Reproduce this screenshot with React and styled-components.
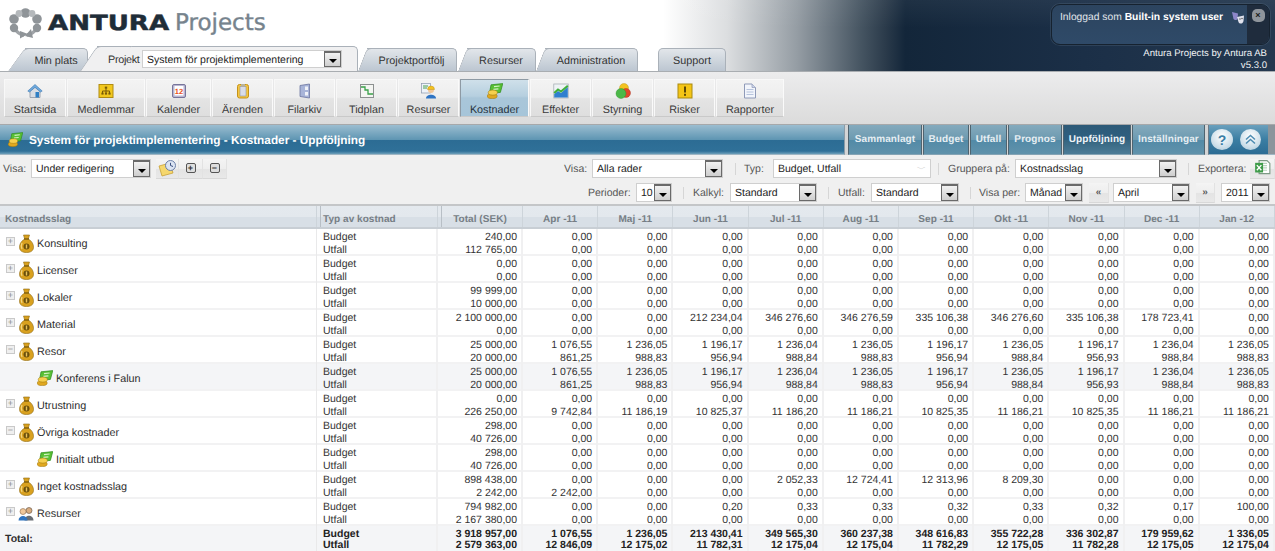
import styled, { createGlobalStyle } from "styled-components";

const GlobalStyle = createGlobalStyle`
  html, body {
    margin: 0;
    padding: 0;
    background: #f0f0f0;
  }
  body {
    width: 1275px;
    height: 551px;
    overflow: hidden;
    font-family: "Liberation Sans", Arial, sans-serif;
    color: #333;
    text-rendering: geometricPrecision;
  }
`;

const Page = styled.div`
  width: 1275px;
  height: 551px;
  overflow: hidden;
`;

/* ---------- header ---------- */

const Header = styled.header`
  display: flex;
  height: 71px;
  background:
    linear-gradient(180deg, rgba(255, 255, 255, 0.05), rgba(255, 255, 255, 0) 40%),
    linear-gradient(90deg, #fff 0, #fff 52%, #dcdee0 57%, #959da4 62.5%, #465562 67.5%, #2a3a4a 69.5%, #13263a 71%, #1b2f47 85%, #24384f 100%);
`;

const HeaderLeft = styled.div`
  display: flex;
  flex-direction: column;
  flex: 1;
`;

const Logo = styled.div`
  display: flex;
  align-items: center;
  height: 46px;
  padding: 0 0 0 9px;
  box-sizing: border-box;
`;

const LogoWord = styled.span`
  display: inline-block;
  width: 121px;
  margin-left: 6px;
  font-family: "DejaVu Sans", sans-serif;
  font-weight: bold;
  font-size: 21px;
  line-height: 24px;
  color: #1f2d38;
  transform: scaleX(1.24);
  transform-origin: left center;
  -webkit-text-stroke: 0.5px #1f2d38;
`;

const LogoProduct = styled.span`
  margin-left: 6px;
  font-family: "DejaVu Sans", sans-serif;
  font-size: 23px;
  line-height: 24px;
  color: #76838d;
  -webkit-text-stroke: 0.4px #76838d;
`;

const TabRow = styled.nav`
  display: flex;
  align-items: flex-end;
  height: 25px;
  padding-left: 25px;
`;

const Tab = styled.div`
  position: relative;
  display: flex;
  align-items: center;
  justify-content: center;
  box-sizing: border-box;
  width: ${(p) => p.$w}px;
  height: ${(p) => (p.$active ? 25 : 23)}px;
  margin-left: ${(p) => p.$ml || 0}px;
  font-size: 10.8px;
  color: #333;
  border: 1px solid #aab1b9;
  border-bottom: 0;
  border-radius: ${(p) => (p.$round ? "5px 5px 0 0" : "0 5px 0 0")};
  border-left: ${(p) => (p.$round ? "1px solid #aab1b9" : "0")};
  background: ${(p) => (p.$active ? "#f0f0f1" : "linear-gradient(180deg, #e2e6ea, #bcc6d1)")};
  z-index: ${(p) => (p.$active ? 2 : 1)};

  ${(p) =>
    p.$round
      ? ""
      : `
  &::before {
    content: "";
    position: absolute;
    top: -1px;
    bottom: 0;
    left: -${p.$slope}px;
    width: ${p.$slope * 2}px;
    border-top: 1px solid #aab1b9;
    border-left: 1px solid #aab1b9;
    border-radius: 5px 0 0 0;
    background: ${p.$active ? "#f0f0f1" : "linear-gradient(180deg, #e2e6ea, #bcc6d1)"};
    transform: skewX(-${p.$angle}deg);
    transform-origin: left bottom;
    z-index: -1;
  }`}
`;

const TabLabel = styled.span`
  position: relative;
  padding-top: 2px;
  white-space: nowrap;
`;

const ProjectLabel = styled(TabLabel)`
  letter-spacing: -0.3px;
`;

const ProjectPicker = styled.div`
  position: relative;
  display: grid;
  grid-template-columns: 34px 200px;
  align-items: center;
  box-sizing: border-box;
  width: 100%;
  padding-left: 11px;
`;

const UserArea = styled.div`
  box-sizing: border-box;
  width: 224px;
  padding: 4px 5px 0 0;
`;

const LoginBox = styled.div`
  display: flex;
  height: 41px;
  box-sizing: border-box;
  overflow: hidden;
  border: 1px solid #16222f;
  border-radius: 9px;
  background: linear-gradient(180deg, #2c445f, #2f4a68);
  box-shadow: 0 0 0 1px rgba(120, 140, 160, 0.2);
`;

const LoginText = styled.div`
  display: flex;
  flex: 1;
  align-items: flex-start;
  gap: 7px;
  padding: 6px 0 0 8px;
  font-size: 10.3px;
  line-height: 14px;
  color: #e2e7ec;
  white-space: nowrap;

  b {
    color: #fff;
  }
`;

const LoginSide = styled.div`
  display: flex;
  justify-content: center;
  width: 22px;
  padding-top: 4px;
  background: #1f2c3d;
`;

const Logout = styled.div`
  width: 13px;
  height: 13px;
  border-radius: 5px;
  background: #8f959c;
  color: #222;
  font-size: 9px;
  font-weight: bold;
  line-height: 13px;
  text-align: center;
`;

const Credit = styled.div`
  padding: 3px 3px 0 0;
  font-size: 9.6px;
  line-height: 12px;
  color: #f0f2f4;
  text-align: right;
`;

/* ---------- main toolbar ---------- */

const Toolbar = styled.div`
  display: flex;
  gap: 1px;
  height: 53px;
  box-sizing: border-box;
  padding: 7px 0 0 4px;
  border-top: 1px solid #a9adb1;
  background: linear-gradient(180deg, #ececed, #dbdbdb);
`;

const ToolButton = styled.div`
  display: flex;
  flex-direction: column;
  align-items: center;
  box-sizing: border-box;
  width: ${(p) => p.$w}px;
  height: 38px;
  padding-top: 3px;
  font-size: 10.8px;
  color: ${(p) => (p.$active ? "#26333d" : "#3a3a3a")};
  border-right: 1px solid #fafafa;
  border-bottom: 1px solid #c9c9c9;
  border-top: 1px solid ${(p) => (p.$active ? "#8e9aa4" : "#f8f8f8")};
  border-left: 1px solid ${(p) => (p.$active ? "#8e9aa4" : "#f8f8f8")};
  background: ${(p) =>
    p.$active
      ? "linear-gradient(180deg, #cfe0ea 0, #b6cfdf 45%, #a9c6d9 50%, #a6c5d9 100%)"
      : "linear-gradient(180deg, #f3f3f3 0, #eeeeee 48%, #e4e4e4 52%, #dedede 100%)"};
`;

const ToolLabel = styled.span`
  margin-top: 5px;
  line-height: 13px;
  white-space: nowrap;
`;

/* ---------- title bar ---------- */

const TitleRow = styled.div`
  display: flex;
  height: 31px;
  box-sizing: border-box;
  border-top: 1px solid #a6a8aa;
  background: #d4d5d6;
`;

const TitleBar = styled.div`
  display: flex;
  align-items: center;
  gap: 6px;
  width: 847px;
  box-sizing: border-box;
  padding-left: 8px;
  font-size: 11.8px;
  font-weight: bold;
  color: #fff;
  border-right: 1px solid #8a9ba7;
  border-bottom: 1px solid #9fb6c4;
  background: linear-gradient(180deg, #9bbdd0 0, #5f96b3 50%, #2c6c94 52%, #2f7098 90%, #6d9fba 100%);
`;

const ViewTabs = styled.div`
  display: flex;
  gap: 1px;
  margin-left: 3px;
`;

const ViewTab = styled.div`
  display: flex;
  align-items: center;
  justify-content: center;
  width: ${(p) => p.$w}px;
  box-sizing: border-box;
  font-size: 10px;
  font-weight: bold;
  color: ${(p) => (p.$active ? "#eef4f8" : "#e6eef3")};
  letter-spacing: 0.1px;
  border-left: 1px solid #4f6470;
  border-right: 1px solid #4f6470;
  border-bottom: 1px solid #85a4b5;
  background: ${(p) =>
    p.$active
      ? "linear-gradient(180deg, #2d5a78 0, #2e5f80 50%, #34647f 52%, #4c7c97 100%)"
      : "linear-gradient(180deg, #84aabd 0, #6d9ab0 50%, #528aa7 52%, #6092ab 100%)"};
`;

const RoundBox = styled.div`
  display: flex;
  align-items: center;
  gap: 7px;
  margin-left: 3px;
  flex: 1;
  padding-left: 2px;
  border-left: 1px solid #6d7c87;
  border-bottom: 1px solid #9fb6c4;
  background: linear-gradient(180deg, #6aa0bd 0, #3b7ea3 50%, #2c6c94 100%);
`;

const RoundButton = styled.div`
  display: flex;
  align-items: center;
  justify-content: center;
  width: ${(p) => p.$w}px;
  height: 21px;
  border-radius: 50%;
  background: radial-gradient(circle at 50% 35%, #ffffff 0, #cfe0ea 60%, #a5c3d5 100%);
  color: #3c7ea6;
  font-size: 14px;
  font-weight: bold;
`;

const Grip = styled.div`
  margin-left: auto;
  align-self: stretch;
  width: 7px;
  background: #8b959c;
`;

/* ---------- filters ---------- */

const Filters = styled.div`
  display: flex;
  flex-direction: column;
  gap: 5px;
  height: 49px;
  box-sizing: border-box;
  padding-top: 4px;
  background: #f0f0f0;
`;

const FilterRow = styled.div`
  display: flex;
  align-items: center;
  height: 19px;
  padding: 0 ${(p) => p.$pr || 0}px 0 3px;
`;

const Field = styled.div`
  display: flex;
  align-items: center;
  gap: ${(p) => p.$gap}px;
  margin-right: ${(p) => p.$mr || 0}px;
`;

const Label = styled.span`
  width: ${(p) => p.$w}px;
  padding-top: 1px;
  font-size: 10.5px;
  color: #555;
  white-space: nowrap;
`;

const SelectBox = styled.div`
  display: flex;
  align-items: center;
  justify-content: space-between;
  box-sizing: border-box;
  width: ${(p) => p.$w}px;
  height: ${(p) => p.$h || 19}px;
  padding: 1px 0 0 4px;
  font-size: 10.5px;
  color: #222;
  background: #fff;
  border: 1px solid #cfcfcf;
  white-space: nowrap;
  overflow: hidden;
`;

const SelectArrow = styled.span`
  display: flex;
  align-items: center;
  justify-content: center;
  flex: none;
  align-self: stretch;
  box-sizing: border-box;
  width: 17px;
  margin-top: -1px;
  border: 1px solid #6a6a6a;
  border-top-width: 2px;
  background: linear-gradient(180deg, #f2f2f2, #cfcfcf);

  &::after {
    content: "";
    margin-top: 3px;
    border: 4px solid transparent;
    border-top: 4px solid #000;
    border-bottom: 0;
  }
`;

const DisabledArrow = styled.span`
  flex: none;
  width: 17px;
  font-size: 9px;
  color: #b5b5b5;
  text-align: center;
`;

const Sep = styled.span`
  width: 1px;
  height: 12px;
  margin: 0 ${(p) => p.$r || 9}px 0 ${(p) => p.$l || 11}px;
  background: #d6d6d6;
`;

const Spacer = styled.span`
  flex: 1;
`;

const IconButton = styled.div`
  display: flex;
  align-items: center;
  justify-content: center;
  box-sizing: border-box;
  width: ${(p) => p.$w}px;
  height: 20px;
  margin-left: ${(p) => p.$ml || 0}px;
  font-size: 10px;
  font-weight: bold;
  color: #555;
  border-right: 1px solid #e2e2e2;
  border-bottom: 1px solid #d8d8d8;
  background: linear-gradient(180deg, #f4f4f4 0, #eeeeee 50%, #e4e4e4 52%, #e8e8e8 100%);
`;

const Square = styled.span`
  display: flex;
  align-items: center;
  justify-content: center;
  box-sizing: border-box;
  width: 10px;
  height: 10px;
  border: 1px solid #555;
  border-radius: 2px;
  background: #dedede;
  color: #333;
  font-size: 9px;
  font-weight: bold;
  line-height: 8px;
`;

/* ---------- table ---------- */

const COLUMNS = "317px 121px 85px repeat(10, 75.2px)";

const HeadRow = styled.div`
  display: grid;
  grid-template-columns: ${COLUMNS};
  height: 25px;
  box-sizing: border-box;
  border-top: 2px solid #c4c6c8;
  border-bottom: 2px solid #c8ced4;
  background: linear-gradient(180deg, #e4e9ee 0, #e3e8ed 50%, #d8dfe6 52%, #d8dfe6 100%);
`;

const HeadCell = styled.div`
  position: relative;
  display: flex;
  align-items: center;
  justify-content: ${(p) => (p.$left ? "flex-start" : "center")};
  padding: 5px 0 0 ${(p) => p.$pl || 0}px;
  font-size: 10px;
  font-weight: bold;
  color: #767e85;
  letter-spacing: 0.05px;
  border-right: 1px solid #cdd4da;
  white-space: nowrap;

  ${(p) =>
    p.$split
      ? `&::before {
    content: "";
    position: absolute;
    top: 0;
    bottom: 0;
    left: 3px;
    width: 1px;
    background: #b8bfc6;
  }`
      : ""}
`;

const Row = styled.div`
  display: grid;
  grid-template-columns: ${COLUMNS};
  height: ${(p) => (p.$total ? 25 : 27)}px;
  box-sizing: border-box;
  border-bottom: ${(p) => (p.$total ? 0 : "2px solid #f2f2f3")};
  background: ${(p) => (p.$shade ? "#f4f5f7" : "#fff")};
  font-weight: ${(p) => (p.$total ? "bold" : "normal")};
`;

const NameCell = styled.div`
  display: flex;
  align-items: center;
  padding-left: ${(p) => (p.$child ? 37 : p.$total ? 5 : 6)}px;
  font-size: ${(p) => (p.$total ? 10.5 : 10.8)}px;
  color: #2e2e2e;
  border-right: 1px solid #e9e9ea;
`;

const Toggle = styled.span`
  display: flex;
  align-items: center;
  justify-content: center;
  box-sizing: border-box;
  width: 9px;
  height: 9px;
  margin-right: 4px;
  margin-top: -3px;
  border: 1px solid #c9c9c9;
  background: #efefef;
  color: #8a8a8a;
  font-size: 9px;
  line-height: 7px;
`;

const NodeLabel = styled.span`
  margin-left: 3px;
  padding-top: 2px;
  white-space: nowrap;
`;

const Lines = styled.div`
  padding: 2px ${(p) => (p.$left ? 0 : 4)}px 0 ${(p) => (p.$left ? 6 : 0)}px;
  font-size: 10.5px;
  line-height: ${(p) => (p.$total ? 12 : 13)}px;
  text-align: ${(p) => (p.$left ? "left" : "right")};
  color: ${(p) => (p.$total ? "#222" : "#333")};
  border-right: 2px solid #f0f0f1;
  white-space: nowrap;

  div {
    height: ${(p) => (p.$total ? 12 : 13)}px;
  }

  div:last-child {
    height: ${(p) => (p.$total ? 11 : 13)}px;
    line-height: ${(p) => (p.$total ? 11 : 13)}px;
  }
`;

/* ---------- drawings ---------- */

const Svg = ({ size = 16, children }) => (
  <svg width={size} height={size} viewBox="0 0 16 16" style={{ flex: "none", display: "block" }}>
    {children}
  </svg>
);

const LogoMark = () => (
  <svg width="33" height="31" viewBox="0 0 33 31" style={{ flex: "none" }}>
    <g fill="none" stroke="#a0a4a8" strokeWidth="3.5">
      <path d="M9 6.5 A12 12 0 0 1 24 6.5" />
      <path d="M27 21 A12 12 0 0 1 18 27" />
      <path d="M15 27 A12 12 0 0 1 6 21" />
    </g>
    <g fill="#8f9498">
      <circle cx="5" cy="11" r="4.8" />
      <circle cx="5" cy="20" r="4.2" />
      <circle cx="16.5" cy="5" r="4.8" />
      <circle cx="28" cy="11" r="4.8" />
      <circle cx="28" cy="20" r="4.2" />
      <path d="M11 23 L19 26 L11 30.5Z" />
      <path d="M22 21 L24 30 L16 28Z" />
    </g>
    <circle cx="10" cy="5.5" r="3.4" fill="#b4b8bb" />
    <circle cx="23" cy="5.5" r="3.4" fill="#b4b8bb" />
  </svg>
);

const Home = () => (
  <Svg>
    <path d="M3 8 V14.5 H13 V8 L8 4Z" fill="#d9dde3" stroke="#8a94a3" strokeWidth="0.8" />
    <path d="M0.8 8 L8 1.5 L15.2 8 L13.5 9 L8 4.4 L2.5 9Z" fill="#6ea9dc" stroke="#3d79b3" strokeWidth="0.6" />
    <rect x="8.5" y="9" width="3.5" height="5.5" fill="#2f7fc4" />
  </Svg>
);

const Org = () => (
  <Svg>
    <rect x="1" y="1.5" width="14" height="13" fill="#f2c81e" stroke="#b08c12" />
    <path d="M8 5 V8 M4.5 10 V8 H11.5 V10 M8 8 V10" stroke="#7a5d08" fill="none" />
    <rect x="6.8" y="3.6" width="2.4" height="2" fill="#7a5d08" />
    <rect x="3.4" y="9.6" width="2.2" height="2" fill="#7a5d08" />
    <rect x="6.9" y="9.6" width="2.2" height="2" fill="#7a5d08" />
    <rect x="10.4" y="9.6" width="2.2" height="2" fill="#7a5d08" />
  </Svg>
);

const Calendar = () => (
  <Svg>
    <rect x="1.5" y="1.5" width="13" height="13" rx="1.5" fill="#b9b6d2" stroke="#77759a" />
    <rect x="3.5" y="3" width="9" height="9.5" fill="#fff" />
    <text x="8" y="10.5" textAnchor="middle" fontSize="7.5" fontWeight="bold" fill="#e8531c" fontFamily="Liberation Sans, sans-serif">
      12
    </text>
  </Svg>
);

const Clipboard = () => (
  <Svg>
    <rect x="2.5" y="1.5" width="11" height="13.5" rx="2" fill="#f6c63e" stroke="#c4921a" />
    <rect x="5" y="3.5" width="6" height="9.5" fill="#d9dde8" stroke="#8d93a8" strokeWidth="0.6" />
    <rect x="6" y="1" width="4" height="2" fill="#b9b39a" />
  </Svg>
);

const Cabinet = () => (
  <Svg>
    <path d="M3 2.5 L12.5 1 V15 L3 13.5Z" fill="#a8b4d8" stroke="#6b749e" strokeWidth="0.8" />
    <rect x="8" y="3.5" width="3" height="3.5" fill="#f0f2f8" />
    <rect x="8" y="9" width="3" height="3.5" fill="#f0f2f8" />
  </Svg>
);

const Timeline = () => (
  <Svg>
    <rect x="1.5" y="1.5" width="13" height="13" fill="#f4f5f2" stroke="#8c9090" />
    <path d="M2 4 H6 V7 H9 V11 H14" fill="none" stroke="#3aa04a" strokeWidth="1.3" />
  </Svg>
);

const Staff = () => (
  <Svg>
    <rect x="0.5" y="0.5" width="9" height="9.5" fill="#eef3fa" stroke="#8b98ad" strokeWidth="0.7" />
    <path d="M2 3 H7 M2 5 H6" stroke="#4aa04f" />
    <circle cx="10" cy="7" r="3" fill="#f1c79a" />
    <path d="M6.5 6.5 A3.5 3.5 0 0 1 13.5 6.5 Z" fill="#f3c11f" stroke="#b48a10" strokeWidth="0.4" />
    <path d="M5 15.5 C5 10.5 15 10.5 15 15.5Z" fill="#2e74c4" />
  </Svg>
);

const Cash = ({ size = 16 }) => (
  <Svg size={size}>
    <path d="M4 1.8 L15.8 0.6 L13.4 9.4 L2.4 10.6Z" fill="#58c034" stroke="#2c8a1e" strokeWidth="0.7" />
    <path d="M7 3.6 L12.6 3 M6.4 6.4 L11.4 5.8" stroke="#d5f3c6" strokeWidth="1.2" />
    <ellipse cx="5.2" cy="13" rx="5" ry="2.6" fill="#e0a820" stroke="#9a740c" strokeWidth="0.5" />
    <ellipse cx="5.8" cy="9.6" rx="4.6" ry="2.5" fill="#f6d04e" stroke="#9a740c" strokeWidth="0.5" />
  </Svg>
);

const Effects = () => (
  <Svg>
    <rect x="0.8" y="1" width="14.4" height="14" fill="#eef3f5" stroke="#a0a8ae" strokeWidth="0.7" />
    <path d="M1.2 14.6 V11 L5 8 L8 10 L14.8 4 V14.6Z" fill="#2f7fcf" />
    <path d="M1.2 10 L5 6.5 L8 8.5 L14.8 2.8" fill="none" stroke="#3fae3a" strokeWidth="2" />
  </Svg>
);

const Lights = () => (
  <Svg>
    <circle cx="9" cy="5" r="4.5" fill="#f3c21e" stroke="#b88f0e" strokeWidth="0.4" />
    <circle cx="11" cy="10" r="4.5" fill="#e3462c" stroke="#a32a14" strokeWidth="0.4" />
    <circle cx="6" cy="10.5" r="5" fill="#4cb848" stroke="#2b8a28" strokeWidth="0.4" />
  </Svg>
);

const Risk = () => (
  <Svg>
    <rect x="1" y="1" width="14" height="14" fill="#f4c516" stroke="#a98a10" />
    <rect x="7" y="3.5" width="2" height="6" fill="#5d4906" />
    <rect x="7" y="10.8" width="2" height="2" fill="#5d4906" />
  </Svg>
);

const Report = () => (
  <Svg>
    <path d="M2.5 1 H10 L13.5 4.5 V15 H2.5Z" fill="#f2f5fb" stroke="#8f9ab8" />
    <path d="M10 1 V4.5 H13.5" fill="#cdd6ea" stroke="#8f9ab8" strokeWidth="0.7" />
    <path d="M4.5 6.5 H11.5 M4.5 9 H11.5 M4.5 11.5 H11.5" stroke="#b6c3dc" />
  </Svg>
);

const Bag = () => (
  <svg width="15" height="19" viewBox="0 0 15 19" style={{ flex: "none", display: "block" }}>
    <path d="M4.5 1 L10.5 1 L9.3 5 C13 7 14.7 10.5 14.5 13.5 C14.3 17 11.5 18.5 7.5 18.5 C3.5 18.5 0.7 17 0.5 13.5 C0.3 10.5 2 7 5.7 5Z" fill="#d9a11f" stroke="#8f6a10" strokeWidth="0.6" />
    <path d="M5 5 H10" stroke="#6f5208" strokeWidth="1.2" />
    <path d="M3 9 C2 11 2 13 3 15" stroke="#f4d783" strokeWidth="1.2" fill="none" />
    <circle cx="7.5" cy="12.5" r="3" fill="#6b4f0a" />
    <rect x="6.8" y="10.5" width="1.4" height="4" fill="#e8c25a" />
  </svg>
);

const People = () => (
  <svg width="16" height="15" viewBox="0 0 16 15" style={{ flex: "none", display: "block", marginLeft: -1 }}>
    <circle cx="11" cy="4.5" r="3" fill="#d9ad80" stroke="#5d4a3a" strokeWidth="0.6" />
    <path d="M6.5 14.5 C6.5 8 15.5 8 15.5 14.5Z" fill="#686d73" />
    <circle cx="5" cy="5.5" r="3" fill="#f0c79a" stroke="#8c6a4a" strokeWidth="0.6" />
    <path d="M0.5 14.5 C0.5 8.5 9.5 8.5 9.5 14.5Z" fill="#2f74c0" />
  </svg>
);

const Masks = () => (
  <svg width="14" height="14" viewBox="0 0 14 14" style={{ flex: "none", marginLeft: 1 }}>
    <path d="M1 1 L7 2.5 L6.5 7.5 C6 9.5 3.5 9.5 2.5 8Z" fill="#8d86c9" />
    <path d="M6 6 L13 4.5 L12.5 10 C12 13 8.5 13.5 7.5 11Z" fill="#e2e3ee" />
    <circle cx="9" cy="8" r="0.7" fill="#444" />
    <circle cx="11" cy="7.5" r="0.7" fill="#444" />
  </svg>
);

const FolderClock = () => (
  <svg width="19" height="17" viewBox="0 0 19 17" style={{ display: "block" }}>
    <path d="M1 6 L12 3 L15 13 L4 16Z" fill="#f5d76e" stroke="#c39a2a" strokeWidth="0.7" />
    <circle cx="12.5" cy="5.5" r="5" fill="#dbe4f2" stroke="#6b7fa8" />
    <path d="M12.5 2.8 V5.5 L15 6.5" fill="none" stroke="#3a4f80" />
  </svg>
);

const Excel = () => (
  <svg width="17" height="17" viewBox="0 0 14 15" style={{ display: "block" }}>
    <path d="M4 0.5 H11 L13.5 3 V12 H4Z" fill="#fff" stroke="#7d9a85" />
    <path d="M6 3 H11 M6 5 H11 M6 7 H11 M6 9 H11" stroke="#b9d4bf" />
    <rect x="0.5" y="2.5" width="7" height="8.5" fill="#3f9c4a" />
    <path d="M2 4.5 L6 9 M6 4.5 L2 9" stroke="#fff" strokeWidth="1.2" />
  </svg>
);

const Chevrons = () => (
  <svg width="13" height="11" viewBox="0 0 13 11">
    <path d="M2 5.5 L6.5 1.5 L11 5.5 M2 9.5 L6.5 5.5 L11 9.5" fill="none" stroke="#4d8cb2" strokeWidth="1.5" />
  </svg>
);

/* ---------- data ---------- */

const ZERO = Array(10).fill("0,00");

const RESOR_BUDGET = ["1 076,55", "1 236,05", "1 196,17", "1 236,04", "1 236,05", "1 196,17", "1 236,05", "1 196,17", "1 236,04", "1 236,05"];
const RESOR_UTFALL = ["861,25", "988,83", "956,94", "988,84", "988,83", "956,94", "988,84", "956,93", "988,84", "988,83"];

const rows = [
  { name: "Konsulting", toggle: "+", total: ["240,00", "112 765,00"] },
  { name: "Licenser", toggle: "+", total: ["0,00", "0,00"] },
  { name: "Lokaler", toggle: "+", total: ["99 999,00", "10 000,00"] },
  {
    name: "Material",
    toggle: "+",
    total: ["2 100 000,00", "0,00"],
    budget: ["0,00", "0,00", "212 234,04", "346 276,60", "346 276,59", "335 106,38", "346 276,60", "335 106,38", "178 723,41", "0,00"],
  },
  { name: "Resor", toggle: "−", total: ["25 000,00", "20 000,00"], budget: RESOR_BUDGET, utfall: RESOR_UTFALL },
  { name: "Konferens i Falun", child: true, shade: true, total: ["25 000,00", "20 000,00"], budget: RESOR_BUDGET, utfall: RESOR_UTFALL },
  {
    name: "Utrustning",
    toggle: "+",
    total: ["0,00", "226 250,00"],
    utfall: ["9 742,84", "11 186,19", "10 825,37", "11 186,20", "11 186,21", "10 825,35", "11 186,21", "10 825,35", "11 186,21", "11 186,21"],
  },
  { name: "Övriga kostnader", toggle: "−", total: ["298,00", "40 726,00"] },
  { name: "Initialt utbud", child: true, total: ["298,00", "40 726,00"] },
  {
    name: "Inget kostnadsslag",
    toggle: "+",
    total: ["898 438,00", "2 242,00"],
    budget: ["0,00", "0,00", "0,00", "2 052,33", "12 724,41", "12 313,96", "8 209,30", "0,00", "0,00", "0,00"],
    utfall: ["2 242,00", "0,00", "0,00", "0,00", "0,00", "0,00", "0,00", "0,00", "0,00", "0,00"],
  },
  {
    name: "Resurser",
    toggle: "+",
    people: true,
    total: ["794 982,00", "2 167 380,00"],
    budget: ["0,00", "0,00", "0,20", "0,33", "0,33", "0,32", "0,33", "0,32", "0,17", "100,00"],
  },
];

const totals = {
  total: ["3 918 957,00", "2 579 363,00"],
  budget: ["1 076,55", "1 236,05", "213 430,41", "349 565,30", "360 237,38", "348 616,83", "355 722,28", "336 302,87", "179 959,62", "1 336,05"],
  utfall: ["12 846,09", "12 175,02", "11 782,31", "12 175,04", "12 175,04", "11 782,29", "12 175,05", "11 782,28", "12 175,05", "12 175,04"],
};

const months = ["Apr -11", "Maj -11", "Jun -11", "Jul -11", "Aug -11", "Sep -11", "Okt -11", "Nov -11", "Dec -11", "Jan -12"];

const tools = [
  { label: "Startsida", w: 62, icon: <Home /> },
  { label: "Medlemmar", w: 78, icon: <Org /> },
  { label: "Kalender", w: 65, icon: <Calendar /> },
  { label: "Ärenden", w: 61, icon: <Clipboard /> },
  { label: "Filarkiv", w: 61, icon: <Cabinet /> },
  { label: "Tidplan", w: 61, icon: <Timeline /> },
  { label: "Resurser", w: 61, icon: <Staff /> },
  { label: "Kostnader", w: 69, icon: <Cash />, active: true },
  { label: "Effekter", w: 61, icon: <Effects /> },
  { label: "Styrning", w: 61, icon: <Lights /> },
  { label: "Risker", w: 61, icon: <Risk /> },
  { label: "Rapporter", w: 68, icon: <Report /> },
];

const viewTabs = [
  { label: "Sammanlagt", w: 74 },
  { label: "Budget", w: 46 },
  { label: "Utfall", w: 37 },
  { label: "Prognos", w: 54 },
  { label: "Uppföljning", w: 68, active: true },
  { label: "Inställningar", w: 73 },
];

const Select = ({ w, h, children }) => (
  <SelectBox $w={w} $h={h}>
    {children}
    <SelectArrow />
  </SelectBox>
);

const TwoLines = ({ values, left, total }) => (
  <Lines $left={left} $total={total}>
    <div>{values[0]}</div>
    <div>{values[1]}</div>
  </Lines>
);

const MonthCells = ({ budget = ZERO, utfall = ZERO, total }) =>
  months.map((m, i) => <TwoLines key={m} total={total} values={[budget[i], utfall[i]]} />);

export default function App() {
  return (
    <Page>
      <GlobalStyle />
      <Header>
        <HeaderLeft>
          <Logo>
            <LogoMark />
            <LogoWord>ANTURA</LogoWord>
            <LogoProduct>Projects</LogoProduct>
          </Logo>
          <TabRow>
            <Tab $w={63} $slope={17} $angle={36}>
              <TabLabel>Min plats</TabLabel>
            </Tab>
            <Tab $w={261} $ml={9} $slope={17} $angle={34} $active>
              <ProjectPicker>
                <ProjectLabel>Projekt</ProjectLabel>
                <Select w={200} h={18}>
                  System för projektimplementering
                </Select>
              </ProjectPicker>
            </Tab>
            <Tab $w={90} $ml={9} $slope={9} $angle={21}>
              <TabLabel>Projektportfölj</TabLabel>
            </Tab>
            <Tab $w={69} $ml={10} $slope={9} $angle={21}>
              <TabLabel>Resurser</TabLabel>
            </Tab>
            <Tab $w={93} $ml={9} $slope={9} $angle={21}>
              <TabLabel>Administration</TabLabel>
            </Tab>
            <Tab $w={68} $ml={20} $round>
              <TabLabel>Support</TabLabel>
            </Tab>
          </TabRow>
        </HeaderLeft>
        <UserArea>
          <LoginBox>
            <LoginText>
              <span>
                Inloggad som <b>Built-in system user</b>
              </span>
              <Masks />
            </LoginText>
            <LoginSide>
              <Logout>×</Logout>
            </LoginSide>
          </LoginBox>
          <Credit>
            Antura Projects by Antura AB
            <br />
            v5.3.0
          </Credit>
        </UserArea>
      </Header>

      <Toolbar>
        {tools.map((t) => (
          <ToolButton key={t.label} $w={t.w} $active={t.active}>
            {t.icon}
            <ToolLabel>{t.label}</ToolLabel>
          </ToolButton>
        ))}
      </Toolbar>

      <TitleRow>
        <TitleBar>
          <Cash size={15} />
          System för projektimplementering - Kostnader - Uppföljning
        </TitleBar>
        <ViewTabs>
          {viewTabs.map((t) => (
            <ViewTab key={t.label} $w={t.w} $active={t.active}>
              {t.label}
            </ViewTab>
          ))}
        </ViewTabs>
        <RoundBox>
          <RoundButton $w={22}>?</RoundButton>
          <RoundButton $w={21}>
            <Chevrons />
          </RoundButton>
          <Grip />
        </RoundBox>
      </TitleRow>

      <Filters>
        <FilterRow>
          <Field $gap={3}>
            <Label $w={25}>Visa:</Label>
            <Select w={120}>Under redigering</Select>
          </Field>
          <IconButton $w={23} $ml={5}>
            <FolderClock />
          </IconButton>
          <IconButton $w={24}>
            <Square>+</Square>
          </IconButton>
          <IconButton $w={24}>
            <Square>−</Square>
          </IconButton>
          <Spacer />
          <Field $gap={4}>
            <Label $w={24}>Visa:</Label>
            <Select w={131}>Alla rader</Select>
          </Field>
          <Sep $l={12} $r={8} />
          <Field $gap={8}>
            <Label $w={21}>Typ:</Label>
            <SelectBox $w={158}>
              Budget, Utfall
              <DisabledArrow>﹀</DisabledArrow>
            </SelectBox>
          </Field>
          <Sep $l={7} $r={9} />
          <Field $gap={4}>
            <Label $w={63}>Gruppera på:</Label>
            <Select w={162}>Kostnadsslag</Select>
          </Field>
          <Sep $l={11} $r={9} />
          <Field $gap={5}>
            <Label $w={47}>Exportera:</Label>
            <IconButton $w={25}>
              <Excel />
            </IconButton>
          </Field>
        </FilterRow>
        <FilterRow $pr={5}>
          <Spacer />
          <Field $gap={5}>
            <Label $w={43}>Perioder:</Label>
            <Select w={36}>10</Select>
          </Field>
          <Sep />
          <Field $gap={6}>
            <Label $w={31}>Kalkyl:</Label>
            <Select w={87}>Standard</Select>
          </Field>
          <Sep />
          <Field $gap={4}>
            <Label $w={29}>Utfall:</Label>
            <Select w={88}>Standard</Select>
          </Field>
          <Sep $r={8} />
          <Field $gap={5} $mr={6}>
            <Label $w={41}>Visa per:</Label>
            <Select w={58}>Månad</Select>
          </Field>
          <Field $gap={4} $mr={6}>
            <IconButton $w={20}>«</IconButton>
            <Select w={77}>April</Select>
          </Field>
          <Field $gap={6}>
            <IconButton $w={19}>»</IconButton>
            <Select w={49}>2011</Select>
          </Field>
        </FilterRow>
      </Filters>

      <HeadRow>
        <HeadCell $left $pl={5}>
          Kostnadsslag
        </HeadCell>
        <HeadCell $left $pl={6} $split>
          Typ av kostnad
        </HeadCell>
        <HeadCell $split>Total (SEK)</HeadCell>
        {months.map((m) => (
          <HeadCell key={m}>{m}</HeadCell>
        ))}
      </HeadRow>

      {rows.map((r) => (
        <Row key={r.name} $shade={r.shade}>
          <NameCell $child={r.child}>
            {r.toggle && <Toggle>{r.toggle}</Toggle>}
            {r.child ? <Cash /> : r.people ? <People /> : <Bag />}
            <NodeLabel>{r.name}</NodeLabel>
          </NameCell>
          <TwoLines left values={["Budget", "Utfall"]} />
          <TwoLines values={r.total} />
          <MonthCells budget={r.budget} utfall={r.utfall} />
        </Row>
      ))}

      <Row $total $shade>
        <NameCell $total>Total:</NameCell>
        <TwoLines left total values={["Budget", "Utfall"]} />
        <TwoLines total values={totals.total} />
        <MonthCells total budget={totals.budget} utfall={totals.utfall} />
      </Row>
    </Page>
  );
}
